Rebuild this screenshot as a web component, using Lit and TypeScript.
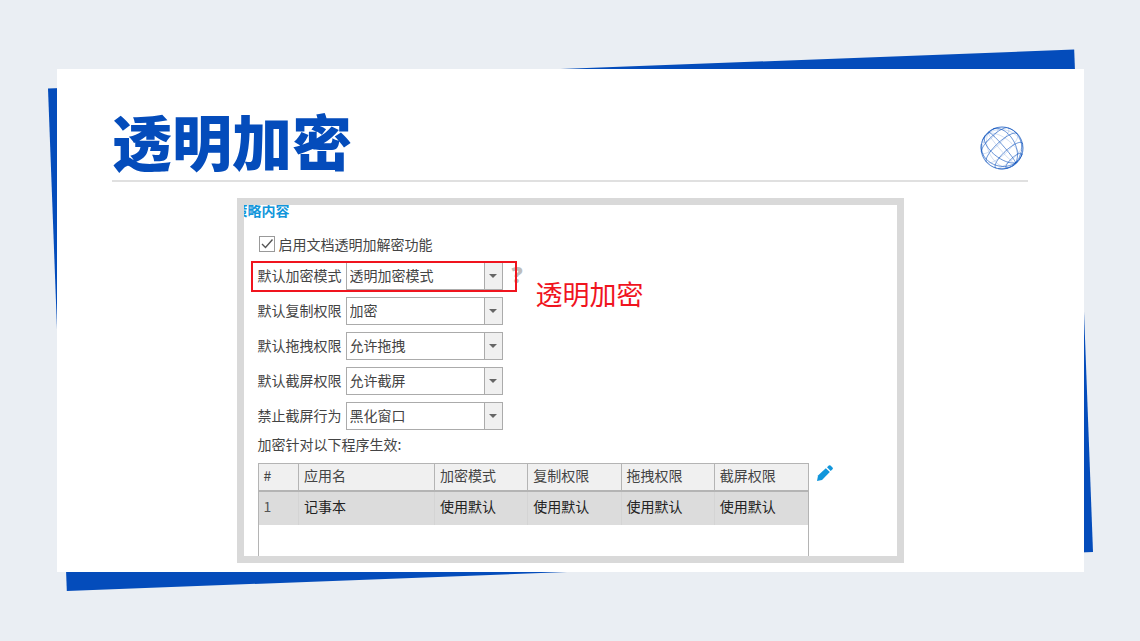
import { LitElement, html, css, svg } from "lit";
import { customElement, property } from "lit/decorators.js";

type Vec = [number, number, number];

/* Wireframe sphere: meridians and parallels, tilted and projected flat. */
@customElement("wire-globe")
class WireGlobe extends LitElement {
  static styles = css`
    :host {
      display: block;
      width: 44px;
      height: 44px;
    }
    .globe {
      display: block;
      width: 100%;
      height: 100%;
      fill: none;
      stroke: #044cbb;
    }
    .front {
      stroke-width: 0.8;
      opacity: 0.75;
    }
    .back {
      stroke-width: 0.6;
      opacity: 0.3;
    }
    .rim {
      stroke-width: 0.9;
      opacity: 0.7;
    }
  `;

  private tilt([x, y, z]: Vec): Vec {
    const a = 0.3;
    const b = -0.75;
    const y1 = y * Math.cos(a) - z * Math.sin(a);
    const z1 = y * Math.sin(a) + z * Math.cos(a);
    return [x * Math.cos(b) - y1 * Math.sin(b), x * Math.sin(b) + y1 * Math.cos(b), z1];
  }

  private trace(point: (t: number) => Vec, front: boolean): string {
    let d = "";
    let pen = false;
    for (let i = 0; i <= 72; i++) {
      const [x, y, z] = this.tilt(point((i / 72) * Math.PI * 2));
      if (z >= 0 === front) {
        d += `${pen ? "L" : "M"}${(22 + 21 * x).toFixed(2)} ${(22 + 21 * y).toFixed(2)}`;
        pen = true;
      } else {
        pen = false;
      }
    }
    return d;
  }

  private lines(front: boolean): string {
    const paths: string[] = [];
    for (let k = 0; k < 5; k++) {
      const lon = (k * Math.PI) / 5 + 0.2;
      paths.push(
        this.trace((t) => [Math.cos(t) * Math.cos(lon), Math.sin(t), Math.cos(t) * Math.sin(lon)], front)
      );
    }
    for (let k = -2; k <= 2; k++) {
      const lat = (k * Math.PI) / 6;
      paths.push(
        this.trace((t) => [Math.cos(lat) * Math.cos(t), Math.sin(lat), Math.cos(lat) * Math.sin(t)], front)
      );
    }
    return paths.join("");
  }

  render() {
    return html`<svg class="globe" viewBox="0 0 44 44" aria-hidden="true">
      ${svg`<path class="back" d=${this.lines(false)} />
      <path class="front" d=${this.lines(true)} />
      <circle class="rim" cx="22" cy="22" r="21" />`}
    </svg>`;
  }
}

@customElement("policy-field")
class PolicyField extends LitElement {
  @property() label = "";
  @property() value = "";

  static styles = css`
    :host {
      display: grid;
      grid-template-columns: 88px 157px;
      font-size: 14px;
      color: #444;
    }
    label {
      line-height: 26px;
    }
    .box {
      display: grid;
      grid-template-columns: 1fr 19px;
      height: 28px;
    }
    .select {
      grid-area: 1 / 1 / 2 / 3;
      appearance: none;
      box-sizing: border-box;
      width: 100%;
      height: 28px;
      margin: 0;
      padding: 0 20px 3px 3px;
      border: 1px solid #ababab;
      border-radius: 0;
      background: #fff;
      color: inherit;
      font: inherit;
    }
    .arrow {
      grid-area: 1 / 2 / 2 / 3;
      z-index: 1;
      display: grid;
      place-items: center;
      border: 1px solid #ababab;
      background: #f0f0f0;
      pointer-events: none;
    }
    .arrow svg {
      width: 8px;
      height: 4px;
      fill: #666;
    }
  `;

  render() {
    return html`<label for="choice">${this.label}</label>
      <div class="box">
        <select class="select" id="choice">
          <option>${this.value}</option>
        </select>
        <span class="arrow"><svg viewBox="0 0 8 4"><path d="M0 0h8L4 4z" /></svg></span>
      </div>`;
  }
}

const FIELDS = [
  ["默认加密模式", "透明加密模式"],
  ["默认复制权限", "加密"],
  ["默认拖拽权限", "允许拖拽"],
  ["默认截屏权限", "允许截屏"],
  ["禁止截屏行为", "黑化窗口"],
];

const COLUMNS = ["#", "应用名", "加密模式", "复制权限", "拖拽权限", "截屏权限"];
const ROWS = [["1", "记事本", "使用默认", "使用默认", "使用默认", "使用默认"]];

@customElement("app-root")
class AppRoot extends LitElement {
  static styles = css`
    :host {
      display: block;
      box-sizing: border-box;
      min-height: 100vh;
      padding: 69px 56px 69px 57px;
      background: #eaeef3;
      font-family: "Noto Sans CJK SC", sans-serif;
    }
    .slide {
      position: relative;
      isolation: isolate;
      background: #fff;
      padding: 0 56px 9px 55px;
    }
    .slide::before,
    .slide::after {
      content: "";
      position: absolute;
    }
    .slide::before {
      z-index: -2;
      inset: -20px -9px -19px -9px;
      background: #044cbb;
      clip-path: polygon(0 7.3%, 98.2% 0.1%, 100% 92.8%, 1.8% 100%);
    }
    .slide::after {
      z-index: -1;
      inset: 0;
      background: #fff;
    }
    .head {
      display: flex;
      justify-content: space-between;
      align-items: flex-end;
      padding: 41px 4px 10px 0;
      border-bottom: 2px solid #e0e0e0;
    }
    .title {
      margin: 0;
      color: #044cbb;
      font-size: 60px;
      line-height: 60px;
      font-weight: 900;
    }
    .shot {
      position: relative;
      box-sizing: border-box;
      max-width: 667px;
      margin: 16px auto 0;
      border: 7px solid #d9d9d9;
      overflow: hidden;
      color: #444;
      font-size: 14px;
      line-height: 20px;
    }
    .section {
      margin: 0 0 0 -10px;
      color: #1296db;
      font-size: 14px;
      line-height: 10px;
      font-weight: 700;
    }
    .policy {
      padding: 19px 0 0 14px;
    }
    .enable {
      display: flex;
      align-items: center;
      gap: 4px;
      padding-left: 1px;
    }
    .tick {
      appearance: none;
      box-sizing: border-box;
      width: 16px;
      height: 16px;
      margin: 0;
      border: 1px solid #999;
    }
    .tickbox {
      display: grid;
    }
    .tickbox > * {
      grid-area: 1 / 1;
    }
    .tickbox svg {
      width: 16px;
      height: 16px;
      fill: none;
      stroke: #555;
      stroke-width: 1.4;
      pointer-events: none;
    }
    .fields {
      display: grid;
      gap: 7px;
      margin-top: 8px;
    }
    .line {
      position: relative;
      display: flex;
      align-items: flex-start;
      gap: 9px;
    }
    .marked::after {
      content: "";
      position: absolute;
      z-index: 2;
      box-sizing: border-box;
      left: -7px;
      top: -1px;
      width: 266px;
      height: 31px;
      border: 2px solid #f0141e;
      pointer-events: none;
    }
    .help {
      padding: 0;
      border: 0;
      background: none;
      color: #bdbdbd;
      font: 800 22px/24px "Open Sans", sans-serif;
    }
    .note {
      position: absolute;
      z-index: 2;
      left: 292px;
      top: 73px;
      color: #f0141e;
      font-size: 27px;
      line-height: 32px;
    }
    .caption {
      margin: 4px 0 9px;
    }
    .apps {
      display: flex;
      align-items: flex-start;
      gap: 8px;
    }
    .list {
      box-sizing: border-box;
      width: 551px;
      min-height: 93px;
      border: solid #b4b4b4;
      border-width: 1px 1px 0;
    }
    .grid {
      width: 100%;
      border-collapse: collapse;
      table-layout: fixed;
    }
    .grid th,
    .grid td {
      box-sizing: border-box;
      padding: 0 0 4px 5px;
      text-align: left;
      font-weight: 400;
    }
    .grid th {
      height: 27px;
      background: #f0f0f0;
      border-right: 1px solid #b4b4b4;
      border-bottom: 2px solid #b4b4b4;
    }
    .grid td {
      height: 34px;
      padding-bottom: 6px;
      background: #dcdcdc;
      border-right: 1px solid #d4d4d4;
      color: #222;
    }
    .grid th:last-child,
    .grid td:last-child {
      border-right: 0;
    }
    .grid .index {
      color: #555;
    }
    .c0 {
      width: 40px;
    }
    .c1 {
      width: 136px;
    }
    .edit {
      display: block;
      margin-top: 2px;
      padding: 0;
      border: 0;
      background: none;
    }
    .edit svg {
      display: block;
      width: 16px;
      height: 16px;
      fill: #1296db;
    }
  `;

  render() {
    return html`<main class="slide">
      <header class="head">
        <h1 class="title">透明加密</h1>
        <wire-globe></wire-globe>
      </header>
      <section class="shot">
        <h2 class="section">策略内容</h2>
        <div class="policy">
          <label class="enable">
            <span class="tickbox">
              <input class="tick" type="checkbox" checked />
              <svg viewBox="0 0 16 16"><path d="M3 8l3.500 3.500 7-8" /></svg>
            </span>
            启用文档透明加解密功能
          </label>
          <div class="fields">
            ${FIELDS.map(
              ([label, value], i) => html`<div class="line ${i === 0 ? "marked" : ""}">
                <policy-field .label=${label} .value=${value}></policy-field>
                ${i === 0 ? html`<button class="help">?</button>` : null}
              </div>`
            )}
          </div>
          <p class="caption">加密针对以下程序生效:</p>
          <div class="apps">
            <div class="list">
              <table class="grid">
                <colgroup>
                  <col class="c0" />
                  <col class="c1" />
                  <col span="4" />
                </colgroup>
                <thead>
                  <tr>
                    ${COLUMNS.map((c) => html`<th>${c}</th>`)}
                  </tr>
                </thead>
                <tbody>
                  ${ROWS.map(
                    (r) => html`<tr>
                      ${r.map((c, i) => html`<td class=${i === 0 ? "index" : ""}>${c}</td>`)}
                    </tr>`
                  )}
                </tbody>
              </table>
            </div>
            <button class="edit" aria-label="编辑">
              <svg viewBox="0 0 16 16">
                <path d="M0 16l1-5.500L8.800 3.300l4 3.700L5 15z" />
                <path d="M10 2.300l1.800-1.700q.8-.8 1.700 0l2 2q.8.900 0 1.700l-1.800 1.600z" />
              </svg>
            </button>
          </div>
        </div>
        <span class="note">透明加密</span>
      </section>
    </main>`;
  }
}
